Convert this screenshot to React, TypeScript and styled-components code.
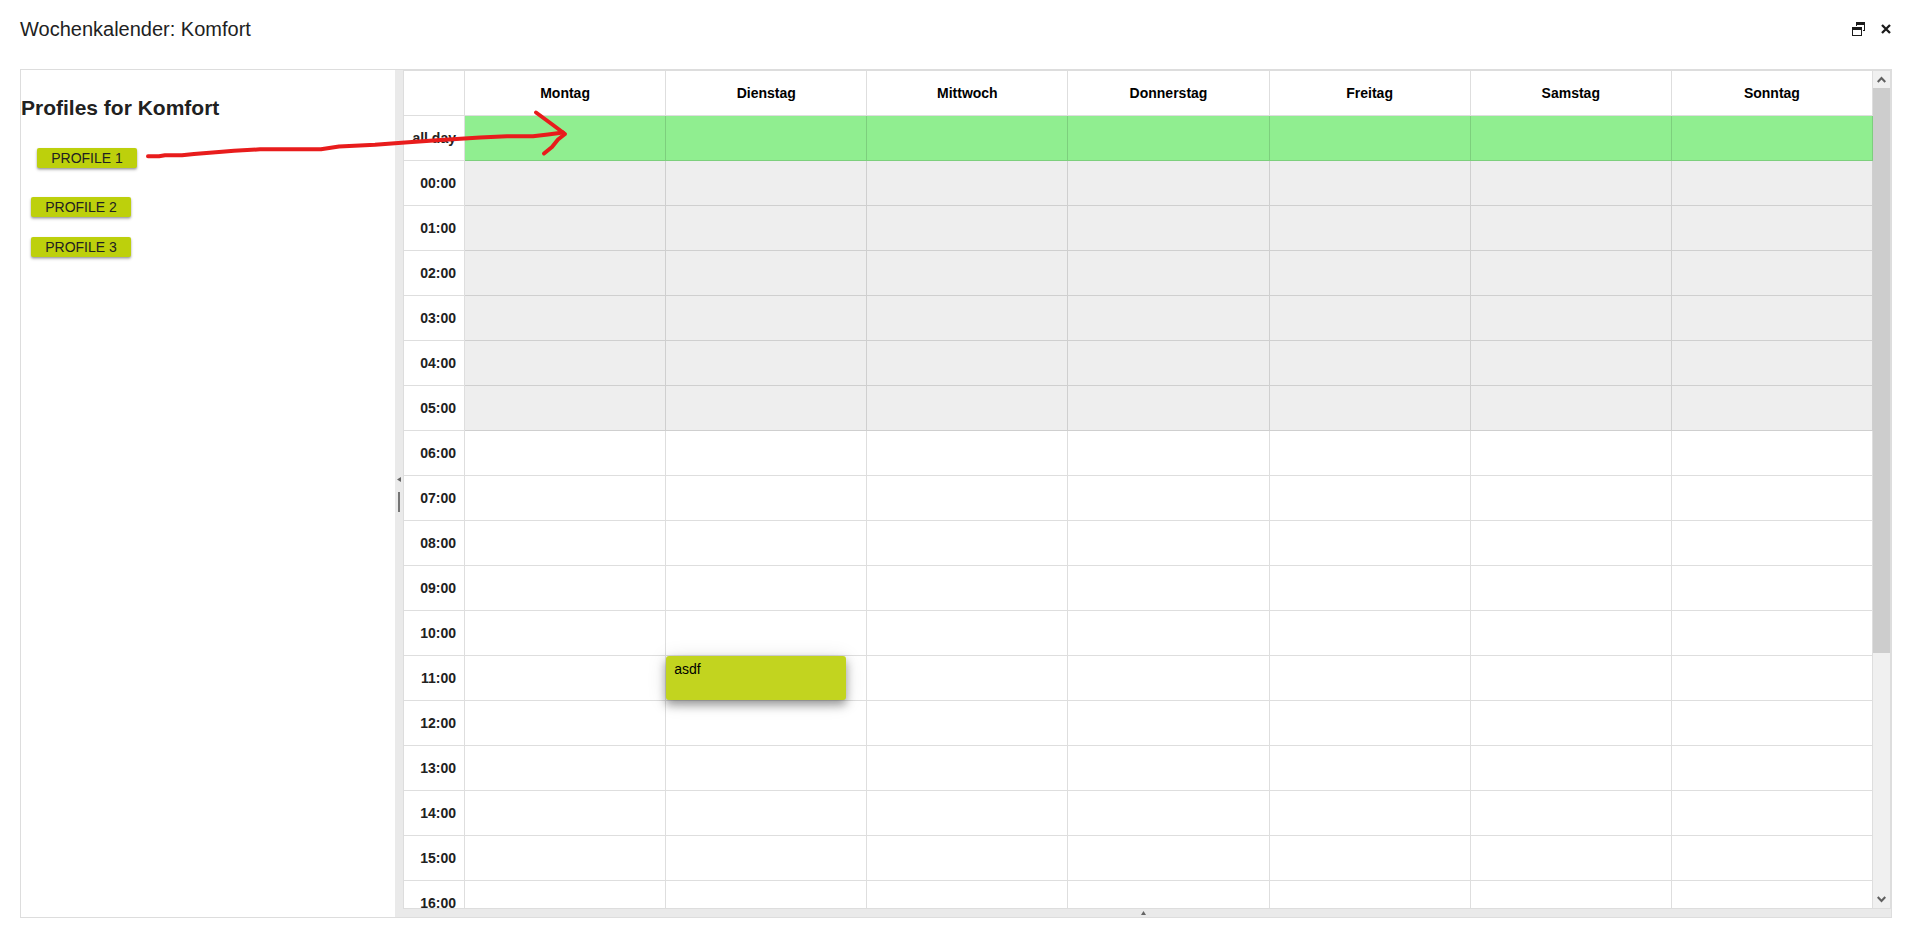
import React, { useRef, useState } from "react";
import styled, { createGlobalStyle } from "styled-components";

const GlobalStyle = createGlobalStyle`
  *, *::before, *::after { box-sizing: border-box; }
  body {
    margin: 0;
    background: #fff;
    color: #212121;
    font: 14px/20px "Liberation Sans", Arial, sans-serif;
  }
  button { font: inherit; color: inherit; border: 0; padding: 0; cursor: pointer; }
`;

const line = "rgba(0, 0, 0, 0.13)";

const Page = styled.div`
  position: relative;
  display: flex;
  flex-direction: column;
  height: 100vh;
  padding: 0 13px 7px 20px;
`;

const TitleBar = styled.header`
  display: flex;
  align-items: center;
  justify-content: space-between;
  flex: none;
  height: 69px;
  padding-bottom: 11px;
`;

const Title = styled.h1`
  margin: 0;
  font-size: 20px;
  line-height: 24px;
  font-weight: 400;
`;

const WindowButtons = styled.div`
  display: flex;
  align-items: center;
  gap: 15px;
`;

const IconButton = styled.button`
  display: flex;
  background: none;
`;

const Frame = styled.main`
  display: flex;
  flex: 1;
  min-height: 0;
  border: 1px solid #ddd;
`;

const Sidebar = styled.aside`
  flex: none;
  width: 20%;
`;

const SidebarTitle = styled.h2`
  margin: 26px 0;
  font-size: 21px;
  line-height: 24px;
  font-weight: 700;
`;

const ProfileList = styled.ul`
  display: flex;
  flex-direction: column;
  align-items: flex-start;
  gap: 20px;
  margin: 0;
  padding: 2px 10px;
  list-style: none;
`;

const ProfileItem = styled.li<{ $dragging?: boolean }>`
  margin: ${(p) => (p.$dragging ? "0 0 9px 6px" : "0")};
`;

const ProfileButton = styled.button`
  display: block;
  width: 100px;
  height: 20px;
  border-radius: 2px;
  background: #bdd00c;
  line-height: 20px;
  text-transform: uppercase;
  cursor: grab;
  box-shadow: 0 2px 3px rgba(0, 0, 0, 0.24), 0 1px 2px rgba(0, 0, 0, 0.2);
`;

const VerticalGutter = styled.div`
  display: flex;
  flex-direction: column;
  align-items: center;
  justify-content: center;
  gap: 10px;
  flex: none;
  width: 8px;
  padding-top: 2px;
  background: #eaeaea;
`;

const Grip = styled.span`
  width: 2px;
  height: 20px;
  background: #757575;
`;

const MainColumn = styled.div`
  display: flex;
  flex-direction: column;
  flex: 1;
  min-width: 0;
`;

const CalendarBox = styled.section`
  display: flex;
  flex: 1;
  min-height: 0;
  border: 1px solid #ddd;
`;

const Viewport = styled.div`
  position: relative;
  z-index: 0;
  flex: 1;
  min-width: 0;
  overflow-y: scroll;
  scrollbar-width: none;
`;

const CalendarTable = styled.table`
  width: 100%;
  table-layout: fixed;
  border-collapse: separate;
  border-spacing: 0;
`;

const CornerCell = styled.td`
  width: 61px;
  height: 45px;
  padding: 0;
  border: solid ${line};
  border-width: 0 1px 1px 0;
`;

const DayHeader = styled.th`
  height: 45px;
  padding: 0;
  border: solid ${line};
  border-width: 0 1px 1px 0;
  color: #000;
`;

const HourHeader = styled.th`
  height: 45px;
  padding: 0 8px 0 0;
  border: solid ${line};
  border-width: 0 1px 1px 0;
  text-align: right;
`;

const fills = { allDay: "#90ee90", night: "#eee", open: "#fff" };

const Slot = styled.td<{ $kind: keyof typeof fills }>`
  position: relative;
  height: 45px;
  padding: 0;
  border: solid ${line};
  border-width: 0 1px 1px 0;
  background: ${(p) => fills[p.$kind]};
`;

const CalendarEvent = styled.button`
  position: absolute;
  z-index: 1;
  inset: 0 auto 0 0;
  width: 90%;
  padding: 3px 8px;
  border-radius: 3px;
  background: #c2d41f;
  color: #000;
  display: flex;
  align-items: flex-start;
  text-align: left;
  box-shadow: 0 5px 10px rgba(0, 0, 0, 0.36), 0 2px 20px rgba(0, 0, 0, 0.12);
`;

const ScrollBar = styled.div`
  display: flex;
  flex-direction: column;
  flex: none;
  width: 17px;
  background: #f0f0f0;
`;

const ScrollButton = styled.button`
  display: flex;
  align-items: center;
  justify-content: center;
  flex: none;
  height: 17px;
  background: #f0f0f0;
`;

const ScrollTrack = styled.div`
  flex: 1;
  min-height: 0;
`;

const ScrollThumb = styled.div`
  height: 70.3%;
  background: #cdcdcd;
`;

const HorizontalGutter = styled.div`
  display: flex;
  align-items: center;
  justify-content: center;
  flex: none;
  height: 8px;
  padding-right: 8px;
  background: #eaeaea;
`;

const ArrowLayer = styled.svg`
  position: absolute;
  z-index: 1;
  top: 0;
  left: 0;
  pointer-events: none;
`;

const days = ["Montag", "Dienstag", "Mittwoch", "Donnerstag", "Freitag", "Samstag", "Sonntag"];
const hours = Array.from({ length: 24 }, (_, h) => h);
const profiles = ["Profile 1", "Profile 2", "Profile 3"];
const events = [{ day: "Dienstag", hour: 11, title: "asdf" }];

const hourLabel = (h: number) => `${String(h).padStart(2, "0")}:00`;

function Chevron({ down }: { down?: boolean }) {
  return (
    <svg width="9" height="7" viewBox="0 0 9 7" fill="none" stroke="#606060" strokeWidth="2.2">
      <path d={down ? "M.7 1 4.5 4.9 8.3 1" : "M.7 6 4.5 2.1 8.3 6"} />
    </svg>
  );
}

export default function App() {
  const viewport = useRef<HTMLDivElement>(null);
  const [thumbShift, setThumbShift] = useState(0);

  const onScroll = () => {
    const el = viewport.current;
    const max = el ? el.scrollHeight - el.clientHeight : 0;
    // The thumb may travel 29.7% of the track, which is 42.2% of its own height.
    setThumbShift(el && max > 0 ? (el.scrollTop / max) * 42.2 : 0);
  };
  const scrollBy = (top: number) => viewport.current?.scrollBy({ top });

  return (
    <Page>
      <GlobalStyle />
      <TitleBar>
        <Title>Wochenkalender: Komfort</Title>
        <WindowButtons>
          <IconButton aria-label="Restore window">
            <svg width="14" height="14" viewBox="0 0 14 14" fill="#1b1b1b">
              <path d="M4 0h9v9h-2V8h1V3H5v1H4z" />
              <path d="M0 5h10v9H0zM1 8v5h8V8z" fillRule="evenodd" />
            </svg>
          </IconButton>
          <IconButton aria-label="Close window">
            <svg width="11" height="10" viewBox="0 0 11 10" stroke="#1b1b1b" strokeWidth="2.3">
              <path d="M1 1 9 9M9 1 1 9" />
            </svg>
          </IconButton>
        </WindowButtons>
      </TitleBar>

      <Frame>
        <Sidebar>
          <SidebarTitle>Profiles for Komfort</SidebarTitle>
          <ProfileList>
            {profiles.map((name, i) => (
              <ProfileItem key={name} $dragging={i === 0}>
                <ProfileButton>{name}</ProfileButton>
              </ProfileItem>
            ))}
          </ProfileList>
        </Sidebar>

        <VerticalGutter role="separator" aria-orientation="vertical">
          <svg width="4" height="5" viewBox="0 0 4 5" fill="#666">
            <path d="M4 0v5L0 2.5z" />
          </svg>
          <Grip />
        </VerticalGutter>

        <MainColumn>
          <CalendarBox>
            <Viewport ref={viewport} onScroll={onScroll}>
              <CalendarTable>
                <thead>
                  <tr>
                    <CornerCell />
                    {days.map((day) => (
                      <DayHeader key={day} scope="col">{day}</DayHeader>
                    ))}
                  </tr>
                </thead>
                <tbody>
                  <tr>
                    <HourHeader scope="row">all day</HourHeader>
                    {days.map((day) => (
                      <Slot key={day} $kind="allDay" />
                    ))}
                  </tr>
                  {hours.map((hour) => (
                    <tr key={hour}>
                      <HourHeader scope="row">{hourLabel(hour)}</HourHeader>
                      {days.map((day) => (
                        <Slot key={day} $kind={hour < 6 ? "night" : "open"}>
                          {events
                            .filter((e) => e.day === day && e.hour === hour)
                            .map((e) => (
                              <CalendarEvent key={e.title}>{e.title}</CalendarEvent>
                            ))}
                        </Slot>
                      ))}
                    </tr>
                  ))}
                </tbody>
              </CalendarTable>
            </Viewport>
            <ScrollBar>
              <ScrollButton aria-label="Scroll up" onClick={() => scrollBy(-45)}>
                <Chevron />
              </ScrollButton>
              <ScrollTrack>
                <ScrollThumb style={{ transform: `translateY(${thumbShift}%)` }} />
              </ScrollTrack>
              <ScrollButton aria-label="Scroll down" onClick={() => scrollBy(45)}>
                <Chevron down />
              </ScrollButton>
            </ScrollBar>
          </CalendarBox>
          <HorizontalGutter role="separator" aria-orientation="horizontal">
            <svg width="5" height="4" viewBox="0 0 5 4" fill="#666">
              <path d="M0 4h5L2.5 0z" />
            </svg>
          </HorizontalGutter>
        </MainColumn>
      </Frame>

      <ArrowLayer
        width="600"
        height="180"
        viewBox="0 0 600 180"
        fill="none"
        stroke="#e81c1c"
        strokeWidth="4"
        strokeLinecap="round"
        strokeLinejoin="round"
        aria-hidden="true"
      >
        <path d="M148 156.300H159L165 155.300H182L194 154L222 151.800L234 150.800L260 149.300H321L339 146.600L375 144.800L405 142.500L437 140.300L480 137.600L507 136.200H533L548 134.400L563 132.500" />
        <path d="M536 112.500L553 125L565 134L558 139.500L552 147L544 153.500" />
      </ArrowLayer>
    </Page>
  );
}
